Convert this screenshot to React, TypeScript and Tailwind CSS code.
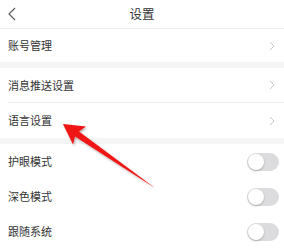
const linkRows = [['消息推送设置'], ['语言设置']];
const toggles = ['护眼模式', '深色模式', '跟随系统'];

const Chevron = () => (
  <svg width="6" height="10" viewBox="0 0 6 10" fill="none">
    <path d="M1 1l4 4-4 4" stroke="#c9c9c9" strokeWidth="1" />
  </svg>
);

const Toggle = () => (
  <div className="relative w-[32px] h-[18px] rounded-full bg-[#dcdcdf]">
    <div className="absolute left-[1px] top-[1px] w-[16px] h-[16px] rounded-full bg-white shadow-[0_1px_2px_rgba(0,0,0,0.25)]" />
  </div>
);

const App: React.FC = () => {
  return (
    <div
      className="relative w-[284px] h-[249px] overflow-hidden bg-white text-[#333]"
      style={{ fontFamily: '"Noto Sans CJK SC", "Noto Sans", sans-serif' }}
    >
      <div className="relative h-[29px] flex items-center justify-center border-b border-[#ededed]">
        <svg className="absolute left-[8px] top-[7px]" width="8" height="14" viewBox="0 0 8 14" fill="none">
          <path d="M7 1L1 7l6 6" stroke="#555" strokeWidth="1.1" />
        </svg>
        <span className="text-[12.5px] leading-none">设置</span>
      </div>

      <div className="h-[33px] flex items-center justify-between pl-[8px] pr-[9px] text-[11px]">
        <span>账号管理</span>
        <Chevron />
      </div>
      <div className="h-[6px] bg-[#f5f5f5]" />

      {linkRows.map(([label], i) => (
        <div key={i} className="pl-[8px]">
          <div
            className={`h-[35px] flex items-center justify-between pr-[9px] text-[11px] ${
              i === 0 ? 'border-b border-[#efefef]' : ''
            }`}
          >
            <span>{label}</span>
            <Chevron />
          </div>
        </div>
      ))}
      <div className="h-[6px] bg-[#f5f5f5]" />

      {toggles.map((label) => (
        <div key={label} className="h-[35px] flex items-center justify-between pl-[8px] pr-[5px] text-[11px]">
          <span>{label}</span>
          <Toggle />
        </div>
      ))}
      <div className="h-px bg-[#efefef]" />

      <svg className="absolute inset-0 pointer-events-none" width="284" height="249" viewBox="0 0 284 249">
        <defs>
          <filter id="sh" x="-20%" y="-20%" width="140%" height="140%">
            <feDropShadow dx="1" dy="1.5" stdDeviation="1.2" floodColor="#000" floodOpacity="0.3" />
          </filter>
        </defs>
        <polygon
          points="63,124 86,126.5 79,131.5 155,188 75,136.5 73,144.5"
          fill="#f01414"
          filter="url(#sh)"
        />
      </svg>
    </div>
  );
};

export default App;
